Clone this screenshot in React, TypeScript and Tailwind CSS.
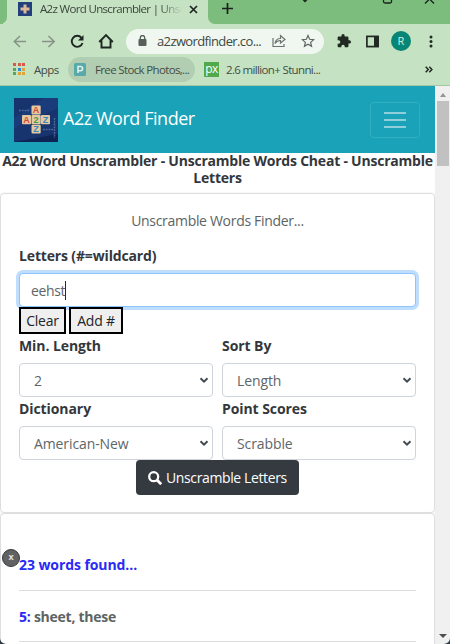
import React from "react";

type LabelProps = { children: React.ReactNode; className?: string };

function Text({ children, className = "" }: LabelProps) {
  return <span className={`block whitespace-nowrap ${className}`}>{children}</span>;
}

function SiteIcon({ size }: { size: number }) {
  return (
    <svg width={size} height={size} viewBox="0 0 44 44" className="shrink-0">
      <rect width="44" height="44" fill="#17346f" />
      <path d="M0 44V30L44 10V0H30L0 20Z" fill="#1d4282" opacity="0.6" />
      <path d="M0 44L44 36V44Z" fill="#0e2454" />
      <g fill="#e3c8a0">
        <rect x="17.500" y="7.500" width="9.200" height="9" rx="1" />
        <rect x="8" y="17" width="9" height="9.200" rx="1" />
        <rect x="17.500" y="17" width="9.200" height="9.200" rx="1" />
        <rect x="27" y="17" width="9" height="9.200" rx="1" />
        <rect x="17.500" y="26.700" width="9.200" height="8.800" rx="1" />
      </g>
      <g fontFamily="Liberation Sans, sans-serif" fontWeight="bold" fontSize="9" textAnchor="middle">
        <text x="22" y="15.200" fill="#d94a35">A</text>
        <text x="12.500" y="25" fill="#d94a35">A</text>
        <text x="22" y="25" fill="#459b50">2</text>
        <text x="31.500" y="25" fill="#3887c2">Z</text>
        <text x="22" y="34.400" fill="#3887c2">Z</text>
      </g>
      <g stroke="#7488ad" strokeWidth="1.500" opacity="0.65" fill="none" strokeDasharray="1.800 1">
        <path d="M5 12.500H15M29 31.500H39M40.500 20V40" />
      </g>
    </svg>
  );
}

function SelectField({ label, value }: { label: string; value: string }) {
  return (
    <div className="h-[63px]">
      <Text className="h-[27px] text-[14px] leading-[19px] font-bold tracking-[-0.08px]">{label}</Text>
      <div className="flex h-[34px] items-center justify-between rounded-[4px] border border-[#ced4da] bg-white pr-[3px] pl-[14px]">
        <Text className="text-[14px] tracking-[-0.1px] text-[#5e6669]">{value}</Text>
        <svg width="10" height="7" viewBox="0 0 10 7" fill="none" stroke="#444b51" strokeWidth="2">
          <path d="M1.500 1.200L5 4.700L8.500 1.200" />
        </svg>
      </div>
    </div>
  );
}

function Tabs() {
  return (
    <div className="flex h-6 bg-[#7cbc7c]">
      <div className="w-[7px] rounded-br-[7px] bg-[#7cbc7c] shadow-[3px_3px_0_#c5e2c3]" />
      <div className="flex h-6 w-[201px] items-start bg-[#c5e2c3] pl-[11px]">
        <svg width="14" height="14" viewBox="0 0 14 14" className="mt-[2px] shrink-0">
          <rect width="14" height="14" fill="#233f7d" />
          <path d="M5.500 2.500h3v3h3v3h-3v3h-3v-3h-3v-3h3z" fill="#ddb99a" />
        </svg>
        <Text className="ml-[8px] w-[142px] [mask-image:linear-gradient(to_right,black_120px,transparent)] text-[11.5px] leading-[18px] tracking-[-0.67px] text-[#3b443b]">A2z Word Unscrambler | Unsc</Text>
        <svg width="9" height="9" viewBox="0 0 9 9" className="mt-[5px] ml-[7px] shrink-0" stroke="#202522" strokeWidth="1.700">
          <path d="M1 1L8 8M8 1L1 8" />
        </svg>
      </div>
      <div className="flex grow rounded-bl-[7px] bg-[#7cbc7c] shadow-[-3px_3px_0_#c5e2c3]">
        <svg width="242" height="24" viewBox="0 0 242 24" fill="none" stroke="#1b211c" strokeWidth="1.300">
          <path d="M14 8.500H25M19.500 3V14" strokeWidth="1.700" />
          <path d="M94 -1.500L97 1.500L100 -1.500" />
          <rect x="175.500" y="-5" width="8" height="8" rx="1.500" />
          <path d="M217 3.500L221.500 -1L226 3.500" />
        </svg>
      </div>
    </div>
  );
}

function Toolbar() {
  return (
    <div className="flex h-[34px] items-center">
      <svg width="126" height="33" viewBox="0 0 126 33" fill="none" className="shrink-0">
        <g stroke="#869486" strokeWidth="1.500">
          <path d="M26 16.500H14M20 11L14.300 16.500L20 22" />
          <path d="M42 16.500H54M48.500 11L54.200 16.500L48.500 22" />
        </g>
        <path d="M81.500 12.800A5.500 5.500 0 1 0 82.500 18" stroke="#1e2723" strokeWidth="1.900" />
        <path d="M83.500 10V15.500H78Z" fill="#1e2723" />
        <path d="M99.200 17L106 10.200L112.800 17M101.500 15.500V22.500H110.500V15.500" stroke="#1e2723" strokeWidth="1.900" />
      </svg>
      <div className="flex h-[25px] w-[198px] items-center rounded-full bg-[#f0f7f0] pl-[12px]">
        <svg width="9" height="12" viewBox="0 0 9 12" className="shrink-0">
          <rect x="0.500" y="4" width="8" height="7" rx="1" fill="#565f59" />
          <path d="M2.300 4.500V2.700a2.200 2.200 0 0 1 4.400 0V4.500" fill="none" stroke="#565f59" strokeWidth="1.300" />
        </svg>
        <Text className="ml-[10px] w-[115px] text-[13px] leading-[20px] tracking-[-0.62px] text-[#414742]">a2zwordfinder.co...</Text>
        <svg width="14" height="14" viewBox="0 0 14 14" className="shrink-0" fill="none" stroke="#6c736e" strokeWidth="1.200">
          <path d="M1 4V12.500H12V10M3 9.500C3.500 6 5.500 4.500 8.500 4.500V1.500L13 5.500L8.500 9V6.500C6 6.500 4.200 7.500 3 9.500Z" />
        </svg>
        <svg width="14" height="14" viewBox="0 0 24 24" className="ml-[15px] shrink-0" fill="none" stroke="#5c635e" strokeWidth="2">
          <path d="M12 2.500L14.800 9L21.800 9.700L16.500 14.300L18.100 21.200L12 17.500L5.900 21.200L7.500 14.300L2.200 9.700L9.200 9Z" />
        </svg>
      </div>
      <svg width="14" height="14" viewBox="1 1 22 22" fill="#202922" className="ml-[13px] shrink-0">
        <path d="M20.500 11H19V7c0-1.100-.9-2-2-2h-4V3.500a2.500 2.500 0 0 0-5 0V5H4c-1.100 0-2 .9-2 2v3.800h1.500a2.700 2.700 0 0 1 0 5.400H2V20c0 1.100.9 2 2 2h3.800v-1.500a2.700 2.700 0 0 1 5.400 0V22H17c1.100 0 2-.9 2-2v-4h1.500a2.500 2.500 0 0 0 0-5z" />
      </svg>
      <svg width="13" height="13" viewBox="0 0 13 13" className="ml-[15px] shrink-0">
        <rect x="0.900" y="1.400" width="11.200" height="10.200" fill="none" stroke="#202922" strokeWidth="1.700" />
        <path d="M8 1H13V12H8Z" fill="#202922" />
      </svg>
      <div className="ml-[12px] flex size-[20px] shrink-0 items-center justify-center rounded-full bg-[#078675] text-[11px] text-[#d9eee6]">R</div>
      <svg width="4" height="13" viewBox="0 0 4 13" className="ml-[18px] shrink-0" fill="#202922">
        <circle cx="2" cy="2" r="1.500" /><circle cx="2" cy="6.500" r="1.500" /><circle cx="2" cy="11" r="1.500" />
      </svg>
    </div>
  );
}

const appColors = ["#d95a46", "#d95a46", "#d95a46", "#58a55c", "#318ad0", "#dda63a", "#58a55c", "#dda63a", "#dda63a"];

function Bookmarks() {
  return (
    <div className="flex h-[27px] items-start text-[11.5px] leading-[24px] tracking-[-0.65px] text-[#424c44]">
      <div className="mt-[5px] ml-[13px] grid grid-cols-3 gap-[1.5px]">
        {appColors.map((color, i) => <span key={i} className="size-[3px]" style={{ backgroundColor: color }} />)}
      </div>
      <Text className="ml-[9px] w-[34px] tracking-[-0.5px]">Apps</Text>
      <div className="-mt-[1px] flex h-[25px] w-[127px] items-center rounded-full bg-[#b2ceb2] pl-[6px]">
        <svg width="12" height="13" viewBox="0 0 12 13" className="shrink-0">
          <rect width="12" height="13" rx="1.500" fill="#57aaa9" />
          <path d="M4 10V3.500H6.500A2.100 2.100 0 0 1 6.500 7.700H4" fill="none" stroke="#e0efea" strokeWidth="1.600" />
        </svg>
        <Text className="ml-[9px]">Free Stock Photos,...</Text>
      </div>
      <div className="mt-[4px] ml-[9px] flex size-[15px] items-center justify-center bg-[#51a94c] pb-[2px] text-[12px] leading-none tracking-[-0.5px] text-white">px</div>
      <Text className="ml-[7px] w-[199px]">2.6 million+ Stunni...</Text>
      <svg width="8" height="7" viewBox="0 0 8 7" className="mt-[8px]" fill="none" stroke="#202922" strokeWidth="1.500">
        <path d="M0.700 0.700L3.300 3.500L0.700 6.300M4.300 0.700L6.900 3.500L4.300 6.300" />
      </svg>
    </div>
  );
}

function SearchCard() {
  return (
    <section className="h-[320px] rounded-[4px] border border-[#dedede] px-[18px] pt-[17px] shadow-[0_0_2px_#e5e5e5]">
      <div className="flex h-[36px] justify-center"><Text className="text-[14px] leading-[20px] tracking-[-0.31px] text-[#5d6463]">Unscramble Words Finder...</Text></div>
      <Text className="h-[26px] text-[14px] leading-[18px] font-bold tracking-[-0.15px] text-[#33373b]">Letters (#=wildcard)</Text>
      <div className="flex h-[34px] items-center rounded-[4px] border border-[#8bc5ff] bg-white pl-[11px] shadow-[0_0_0_3px_#bfdeff]">
        <Text className="text-[14px] tracking-[-0.35px] text-[#5e6568]">eehst</Text><span className="h-[19px] w-px bg-[#252a2e]" />
      </div>
      <div className="relative flex gap-[3px]">
        <button className="flex h-[27px] w-[47px] items-center justify-center border-2 border-black bg-[#efefef] text-[14px] tracking-[-0.2px] text-[#212529]"><Text>Clear</Text></button>
        <button className="flex h-[27px] w-[54px] items-center justify-center border-2 border-black bg-[#efefef] text-[14px] tracking-[-0.2px] text-[#212529]"><Text>Add #</Text></button>
      </div>
      <div className="mt-[2px] grid h-[124px] grid-cols-2 gap-x-[9px] text-[#33373b]">
        <SelectField label="Min. Length" value="2" />
        <SelectField label="Sort By" value="Length" />
        <SelectField label="Dictionary" value="American-New" />
        <SelectField label="Point Scores" value="Scrabble" />
      </div>
      <div className="mx-auto flex h-[35px] w-[163px] items-center rounded-[4px] bg-[#343a40] pl-[12px] text-white">
        <svg width="14" height="14" viewBox="0 0 14 14" fill="none" stroke="white" strokeWidth="2.300" className="shrink-0">
          <circle cx="5.700" cy="5.700" r="4.500" /><path d="M9 9L13.200 13.200" strokeWidth="2.800" />
        </svg>
        <Text className="ml-[4px] text-[14px] tracking-[-0.38px]">Unscramble Letters</Text>
      </div>
    </section>
  );
}

export default function App() {
  return (
    <div className="relative flex h-[644px] w-[450px] flex-col overflow-hidden bg-white font-['Open_Sans','Noto_Sans',sans-serif]">
      <header className="h-[86px] shrink-0 border-b border-[#a8c5a6] bg-[#c5e2c3]">
        <Tabs />
        <Toolbar />
        <Bookmarks />
      </header>
      <div className="flex h-[558px]">
        <main className="w-[435px] shrink-0 overflow-hidden">
          <nav className="flex h-[67px] items-center bg-[#19a2b8] pr-[15px] pl-[14px]">
            <SiteIcon size={44} />
            <Text className="ml-[5px] pb-[2px] text-[18px] leading-[25px] tracking-[-0.46px] text-white">A2z Word Finder</Text>
            <div className="ml-auto flex h-[36px] w-[50px] flex-col items-center justify-center gap-[5px] rounded-[4px] border border-[#33adc0]">
              <span className="h-[2px] w-[22px] bg-[#8fcfdb]" /><span className="h-[2px] w-[22px] bg-[#8fcfdb]" /><span className="h-[2px] w-[22px] bg-[#8fcfdb]" />
            </div>
          </nav>
          <h1 className="flex h-[40px] flex-col items-center text-[14px] leading-[17px] font-bold tracking-[-0.22px] text-[#33373b]">
            <Text className="-mt-px">A2z Word Unscrambler - Unscramble Words Cheat - Unscramble</Text>
            <Text>Letters</Text>
          </h1>
          <SearchCard />
          <section className="h-[160px] rounded-t-[4px] border border-[#dedede] px-[18px] pt-[41px] text-[14px] leading-[20px] font-bold shadow-[0_0_2px_#e5e5e5]">
            <Text className="h-[35px] tracking-[-0.08px] text-[#2a2af5]">23 words found...</Text>
            <div className="h-[52px] border-y border-[#dedede] pt-[16px] text-[#5d6463]">
              <Text className="tracking-[-0.25px]"><span className="text-[#2a2af5]">5:</span> sheet, these</Text>
            </div>
          </section>
        </main>
        <aside className="flex w-[15px] flex-col items-center bg-[#f0f0f0] pt-[7px]">
          <svg width="6" height="4"><path d="M0 4L3 0L6 4Z" fill="#939393" /></svg>
          <div className="mt-[4px] h-[65px] w-[12px] bg-[#c1c1c1]" />
          <svg width="8" height="4" className="mt-auto mb-[6px]"><path d="M0 0L4 4L8 0Z" fill="#4d4d4d" /></svg>
        </aside>
      </div>
      <div className="absolute top-[549px] left-[2px] flex size-[18px] items-center justify-center rounded-full border-[1.5px] border-[#37393b] bg-[#606264] pb-[2px] text-[9px] font-bold text-[#dedede]">x</div>
      <svg width="450" height="6" className="absolute bottom-0 left-0"><path d="M0 0Q0 5 6 6H0ZM450 0Q450 5 444 6H450Z" fill="#303944" /></svg>
    </div>
  );
}
